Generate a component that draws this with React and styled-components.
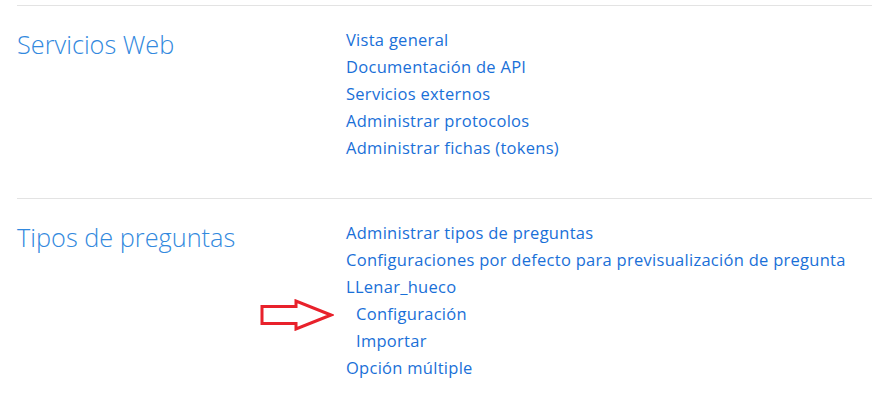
import React from "react";
import styled, { createGlobalStyle } from "styled-components";

const GlobalStyle = createGlobalStyle`
  html, body {
    margin: 0;
    padding: 0;
    background: #ffffff;
  }
  body {
    font-family: "Open Sans", "Noto Sans", sans-serif;
  }
`;

const sections = [
  {
    title: "Servicios Web",
    links: [
      { label: "Vista general" },
      { label: "Documentación de API" },
      { label: "Servicios externos" },
      { label: "Administrar protocolos" },
      { label: "Administrar fichas (tokens)" },
    ],
  },
  {
    title: "Tipos de preguntas",
    links: [
      { label: "Administrar tipos de preguntas" },
      { label: "Configuraciones por defecto para previsualización de pregunta" },
      { label: "LLenar_hueco" },
      { label: "Configuración", nested: true, marked: true },
      { label: "Importar", nested: true },
      { label: "Opción múltiple" },
    ],
  },
];

const Arrow = () => (
  <svg width="74" height="32" viewBox="0 0 74 32">
    <polygon
      points="2,7.5 36,7.5 36,2 71,16 36,30 36,24.5 2,24.5"
      fill="none"
      stroke="#e8212b"
      strokeWidth="3"
      strokeLinejoin="miter"
    />
  </svg>
);

const App = () => (
  <>
    <GlobalStyle />
    <Page>
      {sections.map((section) => (
        <Section key={section.title}>
          <Heading>{section.title}</Heading>
          <LinkList>
            {section.links.map((link) => (
              <Item key={link.label} nested={link.nested}>
                {link.marked && (
                  <Marker>
                    <Arrow />
                  </Marker>
                )}
                <LinkText href="#">{link.label}</LinkText>
              </Item>
            ))}
          </LinkList>
        </Section>
      ))}
    </Page>
  </>
);

const Page = styled.div`
  padding: 5px 0 0 17px;
`;

const Section = styled.section`
  display: flex;
  border-top: 1px solid #e3e3e3;
  padding: 20px 0 37px;
`;

const Heading = styled.h2`
  width: 329px;
  flex-shrink: 0;
  margin: 0;
  padding-top: 2px;
  font-size: 25.3px;
  font-weight: 300;
  line-height: 32px;
  color: #3289de;
`;

const LinkList = styled.ul`
  list-style: none;
  margin: 0;
  padding: 0;
`;

const Item = styled.li`
  position: relative;
  padding-left: ${({ nested }) => (nested ? "10px" : "0")};
  line-height: 27px;
  height: 27px;
  white-space: nowrap;
`;

const LinkText = styled.a`
  font-size: 16.5px;
  color: #1a70d8;
  text-decoration: none;
  letter-spacing: 0.28px;
`;

const Marker = styled.span`
  position: absolute;
  left: -86px;
  top: -1px;
  line-height: 0;
`;

export default App;
